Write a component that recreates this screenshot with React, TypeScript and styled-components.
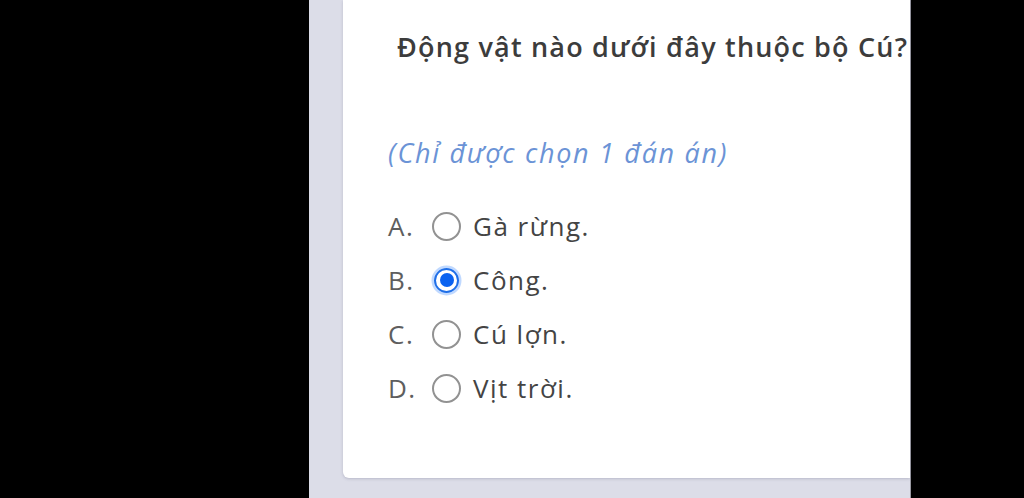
import React from "react";
import styled, { createGlobalStyle } from "styled-components";

const Global = createGlobalStyle`
  html, body { margin: 0; padding: 0; background: #000; }
  body { width: 1024px; height: 498px; overflow: hidden; font-family: "Open Sans", "Noto Sans", sans-serif; }
`;

const Stage = styled.div`
  display: flex;
  width: 1024px;
  height: 498px;
  background: #000;
`;

const Side = styled.div<{ $w: number }>`
  width: ${(p) => p.$w}px;
  flex: none;
  background: #000;
`;

const Panel = styled.div`
  flex: none;
  width: 602px;
  height: 498px;
  background: #dcdde8;
  padding-left: 34px;
  box-sizing: border-box;
  border-right: 1px solid #9a9aa3;
`;

const Card = styled.div`
  height: 478px;
  background: #fff;
  border-bottom-left-radius: 6px;
  box-shadow: 0 1px 3px rgba(80, 80, 110, 0.25);
  padding: 29px 0 0 45px;
  box-sizing: border-box;
  display: flex;
  flex-direction: column;
  overflow: hidden;
`;

const Title = styled.div`
  margin-left: 9px;
  font-size: 27px;
  line-height: 36px;
  font-weight: 600;
  letter-spacing: 1.2px;
  color: #3c3c3c;
  white-space: nowrap;
`;

const Hint = styled.div`
  margin-top: 70px;
  font-size: 27px;
  line-height: 36px;
  font-style: italic;
  letter-spacing: 1.7px;
  color: #6b93d6;
  white-space: nowrap;
`;

const Options = styled.div`
  margin-top: 37px;
  display: flex;
  flex-direction: column;
  gap: 18px;
`;

const Row = styled.label`
  display: flex;
  align-items: center;
  height: 36px;
  font-size: 26px;
  letter-spacing: 1.5px;
  color: #444;
`;

const Letter = styled.span`
  width: 44px;
  color: #5e5e5e;
`;

const Radio = styled.span<{ $on?: boolean }>`
  width: ${(p) => (p.$on ? "25px" : "29px")};
  height: ${(p) => (p.$on ? "25px" : "29px")};
  margin: ${(p) => (p.$on ? "0 14px 0 2px" : "0 12px 0 0")};
  box-sizing: border-box;
  border-radius: 50%;
  border: ${(p) => (p.$on ? "2.5px solid #1f6fe8" : "2px solid #929292")};
  box-shadow: ${(p) => (p.$on ? "0 0 0 2.5px rgba(140,185,255,0.55)" : "none")};
  display: flex;
  align-items: center;
  justify-content: center;
  &::after {
    content: "";
    display: ${(p) => (p.$on ? "block" : "none")};
    width: 14px;
    height: 14px;
    border-radius: 50%;
    background: #0a62f0;
  }
`;

const opts = [
  { l: "A.", t: "Gà rừng." },
  { l: "B.", t: "Công.", on: true },
  { l: "C.", t: "Cú lợn." },
  { l: "D.", t: "Vịt trời." },
];

export default function App() {
  return (
    <>
      <Global />
      <Stage>
        <Side $w={309} />
        <Panel>
          <Card>
            <Title>Động vật nào dưới đây thuộc bộ Cú?</Title>
            <Hint>(Chỉ được chọn 1 đán án)</Hint>
            <Options>
              {opts.map((o) => (
                <Row key={o.l}>
                  <Letter>{o.l}</Letter>
                  <Radio $on={o.on} />
                  <span>{o.t}</span>
                </Row>
              ))}
            </Options>
          </Card>
        </Panel>
        <Side $w={113} />
      </Stage>
    </>
  );
}
